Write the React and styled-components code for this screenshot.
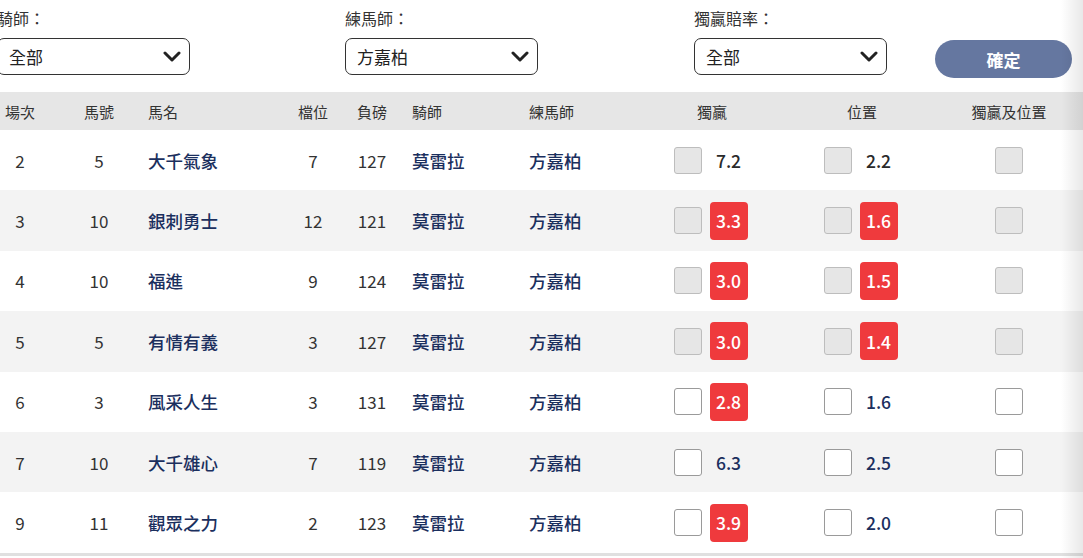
import React from "react";
import styled, { createGlobalStyle } from "styled-components";

const GlobalStyle = createGlobalStyle`
  html, body {
    margin: 0;
    padding: 0;
    background: #fff;
    font-family: "Noto Sans CJK TC", "Noto Sans", sans-serif;
    color: #333;
  }
`;

const Page = styled.div`
  position: relative;
  width: 1083px;
  height: 558px;
  overflow: hidden;

  &::after {
    content: "";
    position: absolute;
    top: 0;
    right: 0;
    bottom: 0;
    width: 22px;
    background: linear-gradient(to right, rgba(0, 0, 0, 0), rgba(0, 0, 0, 0.09));
    pointer-events: none;
  }
`;

const Filters = styled.div`
  display: flex;
  align-items: flex-start;
  padding-top: 7px;
  margin-left: -3px;
  height: 71px;
`;

const Field = styled.div`
  display: flex;
  flex-direction: column;
  width: ${(p) => p.width}px;
`;

const Label = styled.div`
  font-size: 16px;
  line-height: 22px;
  color: #333;
  margin-bottom: 9px;
`;

const Select = styled.div`
  box-sizing: border-box;
  width: 193px;
  height: 37px;
  border: 1px solid #333;
  border-radius: 7px;
  display: flex;
  align-items: center;
  justify-content: space-between;
  padding: 0 8px 0 11px;
  font-size: 17px;
  color: #222;
  background: #fff;
`;

const ConfirmButton = styled.button`
  width: 137px;
  height: 38px;
  margin-top: 33px;
  border: none;
  border-radius: 19px;
  background: #6577a0;
  color: #fff;
  font-family: inherit;
  font-size: 17px;
  font-weight: 700;
`;

const Table = styled.div`
  margin-top: 14px;
  border-bottom: 3px solid #e0e0e0;
`;

const cols = "40px 108px 130px 70px 48px 133px 121px 124px 176px 118px 1fr";

const HeaderRow = styled.div`
  display: grid;
  grid-template-columns: ${cols};
  height: 38px;
  align-items: center;
  background: #e6e6e6;
  font-size: 15px;
  color: #333;
`;

const Row = styled.div`
  display: grid;
  grid-template-columns: ${cols};
  height: 60.4px;
  align-items: center;
  background: ${(p) => (p.$alt ? "#f3f3f3" : "#fff")};
`;

const Cell = styled.div`
  padding-left: ${(p) => p.$pad || 0}px;
  font-size: ${(p) => (p.$name ? "17.5px" : "17px")};
  font-weight: ${(p) => (p.$name ? 500 : 400)};
  color: ${(p) => (p.$name ? "#1b2f5e" : "#333")};
  display: flex;
  justify-content: ${(p) => (p.$align === "left" ? "flex-start" : "center")};
  align-items: center;
`;

const HeadCell = styled.div`
  text-align: ${(p) => p.$align || "center"};
  padding-left: ${(p) => p.$pad || 0}px;
`;

const OddsGroup = styled.div`
  display: flex;
  align-items: center;
  gap: 8px;
  margin-left: -3px;
`;

const Check = styled.div`
  box-sizing: border-box;
  width: 28px;
  height: 27px;
  border-radius: 3px;
  border: 1px solid ${(p) => (p.$disabled ? "#bdbdbd" : "#9a9a9a")};
  background: ${(p) => (p.$disabled ? "#e6e6e6" : "#fff")};
`;

const Odds = styled.div`
  width: 38px;
  height: 38px;
  border-radius: 4px;
  display: flex;
  align-items: center;
  justify-content: center;
  font-size: 17.5px;
  font-weight: 500;
  background: ${(p) => (p.$hot ? "#ef3a3d" : "transparent")};
  color: ${(p) => (p.$hot ? "#fff" : p.$disabled ? "#2a2a2a" : "#1b2f5e")};
`;

const Chevron = () => (
  <svg width="18" height="12" viewBox="0 0 18 12">
    <path d="M2 2 L9 9 L16 2" fill="none" stroke="#222" strokeWidth="3" strokeLinecap="round" strokeLinejoin="round" />
  </svg>
);

const rows = [
  { race: 2, no: 5, name: "大千氣象", draw: 7, wt: 127, win: "7.2", place: "2.2", winHot: false, placeHot: false, disabled: true },
  { race: 3, no: 10, name: "銀刺勇士", draw: 12, wt: 121, win: "3.3", place: "1.6", winHot: true, placeHot: true, disabled: true },
  { race: 4, no: 10, name: "福進", draw: 9, wt: 124, win: "3.0", place: "1.5", winHot: true, placeHot: true, disabled: true },
  { race: 5, no: 5, name: "有情有義", draw: 3, wt: 127, win: "3.0", place: "1.4", winHot: true, placeHot: true, disabled: true },
  { race: 6, no: 3, name: "風采人生", draw: 3, wt: 131, win: "2.8", place: "1.6", winHot: true, placeHot: false, disabled: false },
  { race: 7, no: 10, name: "大千雄心", draw: 7, wt: 119, win: "6.3", place: "2.5", winHot: false, placeHot: false, disabled: false },
  { race: 9, no: 11, name: "觀眾之力", draw: 2, wt: 123, win: "3.9", place: "2.0", winHot: true, placeHot: false, disabled: false },
];

export default function App() {
  return (
    <Page>
      <GlobalStyle />
      <Filters>
        <Field width={348}>
          <Label>騎師：</Label>
          <Select>
            全部
            <Chevron />
          </Select>
        </Field>
        <Field width={349}>
          <Label>練馬師：</Label>
          <Select>
            方嘉柏
            <Chevron />
          </Select>
        </Field>
        <Field width={241}>
          <Label>獨贏賠率：</Label>
          <Select>
            全部
            <Chevron />
          </Select>
        </Field>
        <ConfirmButton>確定</ConfirmButton>
      </Filters>
      <Table>
        <HeaderRow>
          <HeadCell>場次</HeadCell>
          <HeadCell $pad={10}>馬號</HeadCell>
          <HeadCell $align="left">馬名</HeadCell>
          <HeadCell>檔位</HeadCell>
          <HeadCell>負磅</HeadCell>
          <HeadCell $align="left" $pad={16}>騎師</HeadCell>
          <HeadCell $align="left">練馬師</HeadCell>
          <HeadCell>獨贏</HeadCell>
          <HeadCell>位置</HeadCell>
          <HeadCell>獨贏及位置</HeadCell>
          <div />
        </HeaderRow>
        {rows.map((r, i) => (
          <Row key={i} $alt={i % 2 === 1}>
            <Cell>{r.race}</Cell>
            <Cell $pad={10}>{r.no}</Cell>
            <Cell $align="left" $name>{r.name}</Cell>
            <Cell>{r.draw}</Cell>
            <Cell>{r.wt}</Cell>
            <Cell $align="left" $pad={16} $name>莫雷拉</Cell>
            <Cell $align="left" $name>方嘉柏</Cell>
            <Cell>
              <OddsGroup>
                <Check $disabled={r.disabled} />
                <Odds $hot={r.winHot} $disabled={r.disabled}>{r.win}</Odds>
              </OddsGroup>
            </Cell>
            <Cell>
              <OddsGroup>
                <Check $disabled={r.disabled} />
                <Odds $hot={r.placeHot} $disabled={r.disabled}>{r.place}</Odds>
              </OddsGroup>
            </Cell>
            <Cell>
              <Check $disabled={r.disabled} />
            </Cell>
            <div />
          </Row>
        ))}
      </Table>
    </Page>
  );
}
